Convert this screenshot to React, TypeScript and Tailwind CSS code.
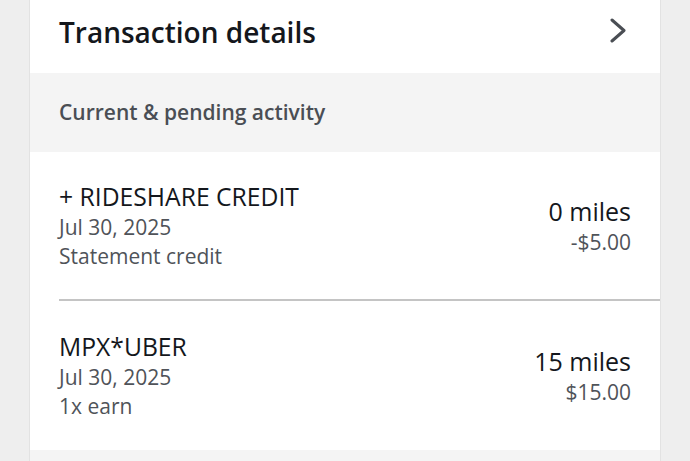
const rows = [
  { name: '+ RIDESHARE CREDIT', date: 'Jul 30, 2025', note: 'Statement credit', miles: '0 miles', amount: '-$5.00' },
  { name: 'MPX*UBER', date: 'Jul 30, 2025', note: '1x earn', miles: '15 miles', amount: '$15.00' },
];

export default function App() {
  return (
    <main
      className="min-h-screen bg-[#eeeeee] px-[30px]"
      style={{ fontFamily: '"Open Sans", sans-serif' }}
    >
      <div className="bg-white shadow-[-1px_0_0_#e2e2e2,1px_0_0_#e2e2e2]">
        {/* header */}
        <header className="h-[73px] flex items-center justify-between pl-[29px] pr-[34px] pb-[9px]">
          <h1 className="text-[28px] font-semibold text-[#14171c]">Transaction details</h1>
          <svg width="16" height="25" viewBox="0 0 16 25" fill="none" className="mb-[4px]">
            <polyline
              points="2,2 14,12.5 2,23"
              stroke="#4a4e54"
              strokeWidth="3"
              strokeLinecap="round"
              strokeLinejoin="round"
            />
          </svg>
        </header>

        <div className="h-[79px] bg-[#f4f4f4] flex items-center pl-[29px]">
          <h2 className="text-[21px] font-semibold text-[#4a4e54]">Current &amp; pending activity</h2>
        </div>

        {rows.map((r, idx) => (
          <div key={idx} className="pl-[29px]">
            <div
              className={`h-[149px] flex items-center justify-between pr-[29px] ${
                idx === 0 ? 'border-b-2 border-[#c4c4c4]' : ''
              }`}
            >
              <div className="flex flex-col">
                <span className="text-[24.7px] leading-[31px] text-[#14171c]">{r.name}</span>
                <span className="text-[21px] leading-[30px] text-[#4f5359]">{r.date}</span>
                <span className="text-[21px] leading-[28px] text-[#4f5359]">{r.note}</span>
              </div>
              <div className="flex flex-col items-end pt-[2px]">
                <span className="text-[25px] leading-[31px] text-[#14171c]">{r.miles}</span>
                <span className="text-[21px] leading-[30px] text-[#4f5359]">{r.amount}</span>
              </div>
            </div>
          </div>
        ))}
      </div>
      <div className="bg-[#f4f4f4] h-[20px] shadow-[-1px_0_0_#e2e2e2,1px_0_0_#e2e2e2]" />
    </main>
  );
}
